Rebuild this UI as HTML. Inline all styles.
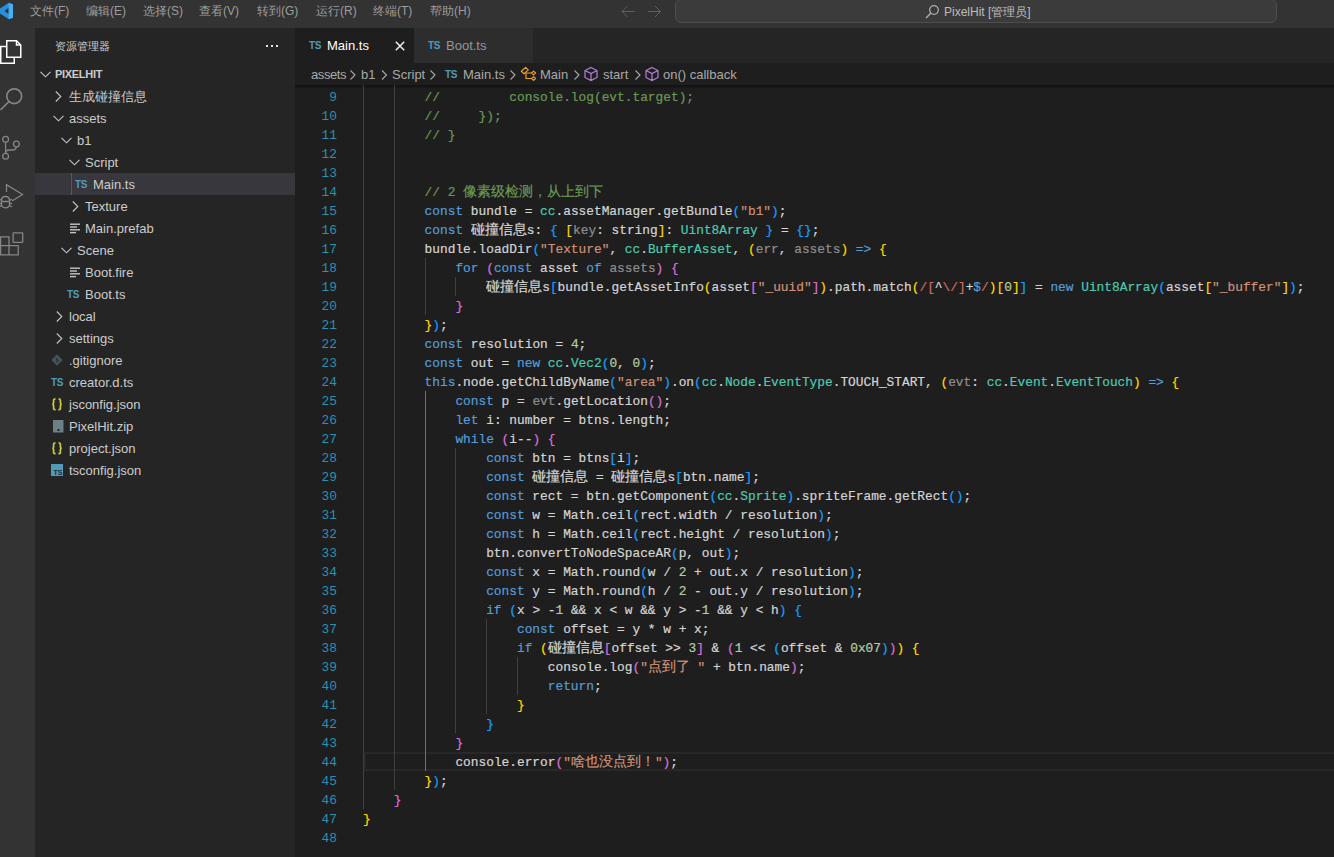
<!DOCTYPE html>
<html><head><meta charset="utf-8">
<style>
*{box-sizing:border-box;margin:0;padding:0}
html,body{width:1334px;height:857px;overflow:hidden;background:#1e1e1e;font-family:"Liberation Sans",sans-serif}
.abs{position:absolute}
#title{left:0;top:0;width:1334px;height:28px;background:#333333;color:#9d9d9d;font-size:12px}
#title .m{position:absolute;top:3px;white-space:nowrap}
#act{left:0;top:28px;width:35px;height:829px;background:#333333}
#side{left:35px;top:28px;width:260px;height:829px;background:#252526;color:#cccccc;font-size:13px}
#tabs{left:295px;top:28px;width:1039px;height:35px;background:#252526;font-size:13px}
#crumb{left:295px;top:63px;width:1039px;height:22px;background:#1e1e1e;color:#a9a9a9;font-size:13px;white-space:nowrap}
#editor{left:295px;top:85px;width:1039px;height:772px;background:#1e1e1e;overflow:hidden}
#nums{position:absolute;left:0;top:3px;width:42px;text-align:right;color:#2b91af;font:12.83px "Liberation Mono",monospace}
#code{position:absolute;left:68px;top:3px;font:12.83px "Liberation Mono",monospace;color:#d4d4d4;-webkit-text-stroke:0.2px}
.l{height:19px;line-height:19px;white-space:pre}
.cj{display:inline-block;font-size:14px;overflow:hidden;vertical-align:top;letter-spacing:0}
.row{position:absolute;left:0;width:260px;height:22px;line-height:22px;white-space:nowrap}
.sel{background:#37373d}
.tsi{top:0;color:#519aba;font-weight:bold;font-size:10px;line-height:22px;letter-spacing:-0.3px}
.jsi{top:0;color:#cbcb41;font-weight:bold;font-size:11px;line-height:21px;letter-spacing:-1px}
.g{position:absolute;width:1px;background:#404040}
.cr{position:absolute;top:1px;line-height:22px}
</style></head><body>
<div id="title" class="abs">
  <svg class="abs" style="left:0;top:0" width="14" height="22" viewBox="0 0 14 22"><path d="M8.8 2.8 L13 4.3 V17.7 L8.8 19.2 L0 13.4 V8.6 Z" fill="#2590e0"/><path d="M8.8 7.6 V14.2 L4.5 10.9 Z" fill="#333333"/><path d="M8.6 2.9 L13 4.3 V17.7 L8.6 19.1 Z" fill="#45aef5"/></svg>
  <div class="m" style="left:30px">文件(F)</div>
  <div class="m" style="left:86px">编辑(E)</div>
  <div class="m" style="left:143px">选择(S)</div>
  <div class="m" style="left:199px">查看(V)</div>
  <div class="m" style="left:257px">转到(G)</div>
  <div class="m" style="left:316px">运行(R)</div>
  <div class="m" style="left:373px">终端(T)</div>
  <div class="m" style="left:430px">帮助(H)</div>
  <svg class="abs" style="left:620px;top:4px" width="50" height="16" viewBox="0 0 50 16"><g fill="none" stroke="#5f5f5f" stroke-width="1"><path d="M2 7.5 H14.5 M7.5 2 L2 7.5 L7.5 13"/><path d="M28 7.5 H40.5 M35 2 L40.5 7.5 L35 13"/></g></svg>
  <div class="abs" style="left:675px;top:-1px;width:602px;height:24px;border:1px solid #4d4d4d;border-radius:6px;background:#3b3b3b"></div>
  <svg class="abs" style="left:925px;top:4px" width="15" height="15" viewBox="0 0 15 15"><circle cx="9" cy="6" r="4.3" fill="none" stroke="#b0b0b0" stroke-width="1.3"/><path d="M6 9 L1 14" stroke="#b0b0b0" stroke-width="1.5"/></svg>
  <div class="m" style="left:944px;top:4px;color:#bdbdbd">PixelHit [管理员]</div>
</div>
<div id="act" class="abs">
  <svg class="abs" style="left:0;top:0" width="35" height="240" viewBox="0 28 35 240">
    <g fill="none" stroke="#ffffff" stroke-width="1.5">
      <path d="M6.75 40.75 H16.5 L20.75 45 V57.25 H6.75 Z"/>
      <path d="M16.5 40.75 V45 H20.75"/>
      <path d="M6.75 46.5 H0.75 V63.25 H14.25 V57.25"/>
    </g>
    <g fill="none" stroke="#858585" stroke-width="1.7">
      <circle cx="14.2" cy="96.2" r="7.4"/>
      <path d="M9 101.5 L0.5 110"/>
    </g>
    <g fill="none" stroke="#858585" stroke-width="1.3">
      <circle cx="5.6" cy="139.3" r="2.9"/>
      <circle cx="5.6" cy="156.2" r="2.9"/>
      <circle cx="16.4" cy="144" r="2.9"/>
      <path d="M5.6 142.2 V153.3"/>
      <path d="M16.4 146.9 Q16 150 12.5 150 H9 Q5.6 150 5.6 153"/>
    </g>
    <g fill="none" stroke="#858585" stroke-width="1.3">
      <path d="M6.5 192 V184.6 L22.5 194.5 L12 201"/>
      <path d="M1.5 200.5 Q1.5 196.5 5.5 196.5 Q9.5 196.5 9.5 200.5 V204 Q9.5 207.8 5.5 207.8 Q1.5 207.8 1.5 204 Z"/>
      <path d="M1.5 201.5 H9.5 M-1 199 L1.5 200.5 M12 199 L9.5 200.5 M-1 203.5 H1.5 M9.5 203.5 H12 M-1 207 L1.5 205.5 M12 207 L9.5 205.5"/>
    </g>
    <g fill="none" stroke="#858585" stroke-width="1.3">
      <rect x="13.1" y="232.8" width="9.6" height="9.6" rx="0.5"/>
      <path d="M0.6 236.8 H9 V254.9 H0.6 Z M0.6 245.7 H18.2 V254.9 H9"/>
    </g>
  </svg>
</div>
<div id="side" class="abs">
  <div class="abs" style="left:20px;top:11px;font-size:11px">资源管理器</div>
  <svg class="abs" style="left:230px;top:16px" width="14" height="4" viewBox="0 0 14 4"><g fill="#e0e0e0"><rect x="1" y="1" width="2" height="2"/><rect x="6" y="1" width="2" height="2"/><rect x="11" y="1" width="2" height="2"/></g></svg>
<div class="row" style="top:35px"><svg class="abs" style="left:5px;top:8px" width="11" height="7" viewBox="0 0 11 7"><polyline points="0.5,0.8 5.5,5.8 10.5,0.8" fill="none" stroke="#c5c5c5" stroke-width="1.1"/></svg><div class="abs" style="left:20px;top:0px;font-weight:bold;font-size:11px;letter-spacing:-0.3px">PIXELHIT</div></div>
<div class="row" style="top:57px"><svg class="abs" style="left:20px;top:6px" width="7" height="11" viewBox="0 0 7 11"><polyline points="0.8,0.5 5.8,5.5 0.8,10.5" fill="none" stroke="#c5c5c5" stroke-width="1.1"/></svg><div class="abs" style="left:34px;top:1px;">生成碰撞信息</div></div>
<div class="row" style="top:79px"><svg class="abs" style="left:18px;top:8px" width="11" height="7" viewBox="0 0 11 7"><polyline points="0.5,0.8 5.5,5.8 10.5,0.8" fill="none" stroke="#c5c5c5" stroke-width="1.1"/></svg><div class="abs" style="left:34px;top:1px;">assets</div></div>
<div class="row" style="top:101px"><svg class="abs" style="left:26px;top:8px" width="11" height="7" viewBox="0 0 11 7"><polyline points="0.5,0.8 5.5,5.8 10.5,0.8" fill="none" stroke="#c5c5c5" stroke-width="1.1"/></svg><div class="abs" style="left:42px;top:1px;">b1</div></div>
<div class="row" style="top:123px"><svg class="abs" style="left:34px;top:8px" width="11" height="7" viewBox="0 0 11 7"><polyline points="0.5,0.8 5.5,5.8 10.5,0.8" fill="none" stroke="#c5c5c5" stroke-width="1.1"/></svg><div class="abs" style="left:50px;top:1px;">Script</div></div>
<div class="row sel" style="top:145px"><div class="abs" style="left:36px;top:0;width:1px;height:22px;background:#585858"></div><div class="abs tsi" style="top:1px;left:40px">TS</div><div class="abs" style="left:58px;top:1px;">Main.ts</div></div>
<div class="row" style="top:167px"><svg class="abs" style="left:37px;top:6px" width="7" height="11" viewBox="0 0 7 11"><polyline points="0.8,0.5 5.8,5.5 0.8,10.5" fill="none" stroke="#c5c5c5" stroke-width="1.1"/></svg><div class="abs" style="left:50px;top:1px;">Texture</div></div>
<div class="row" style="top:189px"><svg class="abs" style="left:35px;top:6px" width="10" height="11" viewBox="0 0 10 11"><g fill="#c5c5c5"><rect x="0" y="0.5" width="10" height="1.4"/><rect x="0" y="3.3" width="7" height="1.4"/><rect x="0" y="6.1" width="10" height="1.4"/><rect x="0" y="8.9" width="6" height="1.4"/></g></svg><div class="abs" style="left:50px;top:1px;">Main.prefab</div></div>
<div class="row" style="top:211px"><svg class="abs" style="left:26px;top:8px" width="11" height="7" viewBox="0 0 11 7"><polyline points="0.5,0.8 5.5,5.8 10.5,0.8" fill="none" stroke="#c5c5c5" stroke-width="1.1"/></svg><div class="abs" style="left:42px;top:1px;">Scene</div></div>
<div class="row" style="top:233px"><svg class="abs" style="left:35px;top:6px" width="10" height="11" viewBox="0 0 10 11"><g fill="#c5c5c5"><rect x="0" y="0.5" width="10" height="1.4"/><rect x="0" y="3.3" width="7" height="1.4"/><rect x="0" y="6.1" width="10" height="1.4"/><rect x="0" y="8.9" width="6" height="1.4"/></g></svg><div class="abs" style="left:50px;top:1px;">Boot.fire</div></div>
<div class="row" style="top:255px"><div class="abs tsi" style="top:1px;left:32px">TS</div><div class="abs" style="left:50px;top:1px;">Boot.ts</div></div>
<div class="row" style="top:277px"><svg class="abs" style="left:21px;top:6px" width="7" height="11" viewBox="0 0 7 11"><polyline points="0.8,0.5 5.8,5.5 0.8,10.5" fill="none" stroke="#c5c5c5" stroke-width="1.1"/></svg><div class="abs" style="left:34px;top:1px;">local</div></div>
<div class="row" style="top:299px"><svg class="abs" style="left:21px;top:6px" width="7" height="11" viewBox="0 0 7 11"><polyline points="0.8,0.5 5.8,5.5 0.8,10.5" fill="none" stroke="#c5c5c5" stroke-width="1.1"/></svg><div class="abs" style="left:34px;top:1px;">settings</div></div>
<div class="row" style="top:321px"><svg class="abs" style="left:16px;top:5px" width="12" height="12" viewBox="0 0 12 12"><path d="M6 0.3 L11.7 6 L6 11.7 L0.3 6 Z" fill="#41535b"/><path d="M4.5 3.5 L8 7 M6 5 V9" stroke="#252526" stroke-width="0.9"/></svg><div class="abs" style="left:34px;top:1px;">.gitignore</div></div>
<div class="row" style="top:343px"><div class="abs tsi" style="top:1px;left:16px">TS</div><div class="abs" style="left:34px;top:1px;">creator.d.ts</div></div>
<div class="row" style="top:365px"><svg class="abs" style="left:16px;top:5px" width="13" height="13" viewBox="0 0 13 13"><g fill="none" stroke="#cbcb41" stroke-width="1.7"><path d="M4.6 1 H3.8 Q2.6 1 2.6 2.3 V5 Q2.6 6.3 1.2 6.3 Q2.6 6.3 2.6 7.6 V10.4 Q2.6 11.6 3.8 11.6 H4.6"/><path d="M7.4 1 H8.2 Q9.4 1 9.4 2.3 V5 Q9.4 6.3 10.8 6.3 Q9.4 6.3 9.4 7.6 V10.4 Q9.4 11.6 8.2 11.6 H7.4"/></g></svg><div class="abs" style="left:34px;top:1px;">jsconfig.json</div></div>
<div class="row" style="top:387px"><svg class="abs" style="left:18px;top:5px" width="11" height="13" viewBox="0 0 11 13"><rect x="0" y="0" width="10.5" height="12.5" fill="#6d8086"/><rect x="4.5" y="9" width="2" height="2" fill="#252526"/></svg><div class="abs" style="left:34px;top:1px;">PixelHit.zip</div></div>
<div class="row" style="top:409px"><svg class="abs" style="left:16px;top:5px" width="13" height="13" viewBox="0 0 13 13"><g fill="none" stroke="#cbcb41" stroke-width="1.7"><path d="M4.6 1 H3.8 Q2.6 1 2.6 2.3 V5 Q2.6 6.3 1.2 6.3 Q2.6 6.3 2.6 7.6 V10.4 Q2.6 11.6 3.8 11.6 H4.6"/><path d="M7.4 1 H8.2 Q9.4 1 9.4 2.3 V5 Q9.4 6.3 10.8 6.3 Q9.4 6.3 9.4 7.6 V10.4 Q9.4 11.6 8.2 11.6 H7.4"/></g></svg><div class="abs" style="left:34px;top:1px;">project.json</div></div>
<div class="row" style="top:431px"><svg class="abs" style="left:16px;top:5px" width="12" height="12" viewBox="0 0 12 12"><rect x="0" y="0" width="12" height="12" fill="#519aba"/><text x="7" y="10.5" text-anchor="middle" font-family="Liberation Sans" font-size="7" fill="#1e2a33" font-weight="bold">TS</text></svg><div class="abs" style="left:34px;top:1px;">tsconfig.json</div></div>

</div>
<div id="tabs" class="abs">
  <div class="abs" style="left:0;top:0;width:119px;height:35px;background:#1e1e1e">
    <div class="abs tsi" style="left:14px;top:7px">TS</div>
    <div class="abs" style="left:32px;top:10px;color:#ffffff">Main.ts</div>
    <svg class="abs" style="left:100px;top:13px" width="10" height="10" viewBox="0 0 10 10"><path d="M0.8 0.8 L9.2 9.2 M9.2 0.8 L0.8 9.2" stroke="#f0f0f0" stroke-width="1.5"/></svg>
  </div>
  <div class="abs" style="left:119px;top:0;width:119px;height:35px;background:#2d2d2d">
    <div class="abs tsi" style="left:14px;top:7px">TS</div>
    <div class="abs" style="left:32px;top:10px;color:#969696">Boot.ts</div>
  </div>
</div>
<div id="crumb" class="abs">
  <div class="cr" style="left:16px;letter-spacing:-0.4px">assets</div>
  <div class="cr" style="left:66px">b1</div>
  <div class="cr" style="left:97px">Script</div>
  <div class="cr tsi" style="left:150px">TS</div>
  <div class="cr" style="left:168px">Main.ts</div>
  <div class="cr" style="left:245px">Main</div>
  <div class="cr" style="left:308px">start</div>
  <div class="cr" style="left:368px">on() callback</div>
  <svg class="abs" style="left:0;top:0" width="460" height="22" viewBox="0 0 460 22"><g fill="none" stroke="#a9a9a9" stroke-width="1.1">
    <path d="M55.5 7.5 L60 12 L55.5 16.5"/><path d="M87 7.5 L91.5 12 L87 16.5"/><path d="M135.5 7.5 L140 12 L135.5 16.5"/><path d="M215.5 7.5 L220 12 L215.5 16.5"/><path d="M279.5 7.5 L284 12 L279.5 16.5"/><path d="M340.5 7.5 L345 12 L340.5 16.5"/>
  </g>
  <g fill="none" stroke="#ee9d28" stroke-width="1.2" stroke-linejoin="round"><path d="M226.3 8.3 L230.6 4.4 L233.3 6.9 L229 10.8 Z"/><path d="M236.6 10 L238.6 8.1 L240.5 10 L238.6 11.9 Z"/><path d="M236.6 15.5 L238.6 13.6 L240.5 15.5 L238.6 17.4 Z"/><path d="M231 9.5 V15.5 H236.6 M231 10 H236.6"/></g>
  <g fill="none" stroke="#b180d7" stroke-width="1.2"><path d="M296 4.5 L302 7.5 V14.5 L296 17.5 L290 14.5 V7.5 Z M290 7.5 L296 10.5 L302 7.5 M296 10.5 V17.5"/></g>
  <g fill="none" stroke="#b180d7" stroke-width="1.2"><path d="M357 4.5 L363 7.5 V14.5 L357 17.5 L351 14.5 V7.5 Z M351 7.5 L357 10.5 L363 7.5 M357 10.5 V17.5"/></g>
  </svg>
</div>
<div id="editor" class="abs">
<div class="abs" style="left:0;top:0;width:1039px;height:4px;background:linear-gradient(#121212,#151515 40%,#1e1e1e)"></div>
<div class="abs" style="left:69px;top:667px;width:980px;height:19px;border:2px solid #282828"></div>
<div class="g" style="left:68px;top:0px;height:724px;background:#404040"></div>
<div class="g" style="left:99px;top:0px;height:705px;background:#404040"></div>
<div class="g" style="left:130px;top:173px;height:57px;background:#404040"></div>
<div class="g" style="left:130px;top:306px;height:380px;background:#707070"></div>
<div class="g" style="left:160px;top:192px;height:19px;background:#404040"></div>
<div class="g" style="left:160px;top:363px;height:285px;background:#404040"></div>
<div class="g" style="left:191px;top:534px;height:95px;background:#404040"></div>
<div class="g" style="left:222px;top:572px;height:38px;background:#404040"></div>

<div id="nums">
<div class="l">9</div>
<div class="l">10</div>
<div class="l">11</div>
<div class="l">12</div>
<div class="l">13</div>
<div class="l">14</div>
<div class="l">15</div>
<div class="l">16</div>
<div class="l">17</div>
<div class="l">18</div>
<div class="l">19</div>
<div class="l">20</div>
<div class="l">21</div>
<div class="l">22</div>
<div class="l">23</div>
<div class="l">24</div>
<div class="l">25</div>
<div class="l">26</div>
<div class="l">27</div>
<div class="l">28</div>
<div class="l">29</div>
<div class="l">30</div>
<div class="l">31</div>
<div class="l">32</div>
<div class="l">33</div>
<div class="l">34</div>
<div class="l">35</div>
<div class="l">36</div>
<div class="l">37</div>
<div class="l">38</div>
<div class="l">39</div>
<div class="l">40</div>
<div class="l">41</div>
<div class="l">42</div>
<div class="l">43</div>
<div class="l">44</div>
<div class="l">45</div>
<div class="l">46</div>
<div class="l">47</div>
<div class="l">48</div>

</div>
<div id="code">
<div class="l">        <span style="color:#6a9955">//         console.log(evt.target);</span></div>
<div class="l">        <span style="color:#6a9955">//     });</span></div>
<div class="l">        <span style="color:#6a9955">// }</span></div>
<div class="l"></div>
<div class="l"></div>
<div class="l">        <span style="color:#6a9955">// 2 </span><span class="cj" style="color:#6a9955;width:140px">像素级检测，从上到下</span></div>
<div class="l">        <span style="color:#569cd6">const</span><span style="color:#d4d4d4"> bundle = </span><span style="color:#4ec9b0">cc</span><span style="color:#d4d4d4">.assetManager.getBundle</span><span style="color:#179fff">(</span><span style="color:#ce9178">&quot;b1&quot;</span><span style="color:#179fff">)</span><span style="color:#d4d4d4">;</span></div>
<div class="l">        <span style="color:#569cd6">const</span><span style="color:#d4d4d4"> </span><span class="cj" style="color:#d4d4d4;width:56px">碰撞信息</span><span style="color:#d4d4d4">s: </span><span style="color:#179fff">{</span><span style="color:#d4d4d4"> </span><span style="color:#ffd700">[</span><span style="color:#8f8f8f">key</span><span style="color:#d4d4d4">: string</span><span style="color:#ffd700">]</span><span style="color:#d4d4d4">: </span><span style="color:#4ec9b0">Uint8Array</span><span style="color:#d4d4d4"> </span><span style="color:#179fff">}</span><span style="color:#d4d4d4"> = </span><span style="color:#179fff">{}</span><span style="color:#d4d4d4">;</span></div>
<div class="l">        <span style="color:#d4d4d4">bundle.loadDir</span><span style="color:#179fff">(</span><span style="color:#ce9178">&quot;Texture&quot;</span><span style="color:#d4d4d4">, </span><span style="color:#4ec9b0">cc</span><span style="color:#d4d4d4">.</span><span style="color:#4ec9b0">BufferAsset</span><span style="color:#d4d4d4">, </span><span style="color:#ffd700">(</span><span style="color:#8f8f8f">err</span><span style="color:#d4d4d4">, </span><span style="color:#8f8f8f">assets</span><span style="color:#ffd700">)</span><span style="color:#d4d4d4"> </span><span style="color:#569cd6">=&gt;</span><span style="color:#d4d4d4"> </span><span style="color:#ffd700">{</span></div>
<div class="l">            <span style="color:#569cd6">for</span><span style="color:#d4d4d4"> </span><span style="color:#da70d6">(</span><span style="color:#569cd6">const</span><span style="color:#d4d4d4"> asset </span><span style="color:#569cd6">of</span><span style="color:#d4d4d4"> </span><span style="color:#8f8f8f">assets</span><span style="color:#da70d6">)</span><span style="color:#d4d4d4"> </span><span style="color:#da70d6">{</span></div>
<div class="l">                <span class="cj" style="color:#d4d4d4;width:56px">碰撞信息</span><span style="color:#d4d4d4">s</span><span style="color:#179fff">[</span><span style="color:#d4d4d4">bundle.getAssetInfo</span><span style="color:#ffd700">(</span><span style="color:#d4d4d4">asset</span><span style="color:#da70d6">[</span><span style="color:#ce9178">&quot;_uuid&quot;</span><span style="color:#da70d6">]</span><span style="color:#ffd700">)</span><span style="color:#d4d4d4">.path.match</span><span style="color:#ffd700">(</span><span style="color:#d16969">/[</span><span style="color:#d4d4d4">^</span><span style="color:#d16969">\/]</span><span style="color:#d4d4d4">+</span><span style="color:#569cd6">$</span><span style="color:#d16969">/</span><span style="color:#ffd700">)</span><span style="color:#ffd700">[</span><span style="color:#b5cea8">0</span><span style="color:#ffd700">]</span><span style="color:#179fff">]</span><span style="color:#d4d4d4"> = </span><span style="color:#569cd6">new</span><span style="color:#d4d4d4"> </span><span style="color:#4ec9b0">Uint8Array</span><span style="color:#179fff">(</span><span style="color:#d4d4d4">asset</span><span style="color:#ffd700">[</span><span style="color:#ce9178">&quot;_buffer&quot;</span><span style="color:#ffd700">]</span><span style="color:#179fff">)</span><span style="color:#d4d4d4">;</span></div>
<div class="l">            <span style="color:#da70d6">}</span></div>
<div class="l">        <span style="color:#ffd700">}</span><span style="color:#179fff">)</span><span style="color:#d4d4d4">;</span></div>
<div class="l">        <span style="color:#569cd6">const</span><span style="color:#d4d4d4"> resolution = </span><span style="color:#b5cea8">4</span><span style="color:#d4d4d4">;</span></div>
<div class="l">        <span style="color:#569cd6">const</span><span style="color:#d4d4d4"> out = </span><span style="color:#569cd6">new</span><span style="color:#d4d4d4"> </span><span style="color:#4ec9b0">cc</span><span style="color:#d4d4d4">.</span><span style="color:#4ec9b0">Vec2</span><span style="color:#179fff">(</span><span style="color:#b5cea8">0</span><span style="color:#d4d4d4">, </span><span style="color:#b5cea8">0</span><span style="color:#179fff">)</span><span style="color:#d4d4d4">;</span></div>
<div class="l">        <span style="color:#569cd6">this</span><span style="color:#d4d4d4">.node.getChildByName</span><span style="color:#179fff">(</span><span style="color:#ce9178">&quot;area&quot;</span><span style="color:#179fff">)</span><span style="color:#d4d4d4">.on</span><span style="color:#179fff">(</span><span style="color:#4ec9b0">cc</span><span style="color:#d4d4d4">.</span><span style="color:#4ec9b0">Node</span><span style="color:#d4d4d4">.</span><span style="color:#4ec9b0">EventType</span><span style="color:#d4d4d4">.TOUCH_START, </span><span style="color:#ffd700">(</span><span style="color:#8f8f8f">evt</span><span style="color:#d4d4d4">: </span><span style="color:#4ec9b0">cc</span><span style="color:#d4d4d4">.</span><span style="color:#4ec9b0">Event</span><span style="color:#d4d4d4">.</span><span style="color:#4ec9b0">EventTouch</span><span style="color:#ffd700">)</span><span style="color:#d4d4d4"> </span><span style="color:#569cd6">=&gt;</span><span style="color:#d4d4d4"> </span><span style="color:#ffd700">{</span></div>
<div class="l">            <span style="color:#569cd6">const</span><span style="color:#d4d4d4"> p = </span><span style="color:#8f8f8f">evt</span><span style="color:#d4d4d4">.getLocation</span><span style="color:#da70d6">()</span><span style="color:#d4d4d4">;</span></div>
<div class="l">            <span style="color:#569cd6">let</span><span style="color:#d4d4d4"> i: number = btns.length;</span></div>
<div class="l">            <span style="color:#569cd6">while</span><span style="color:#d4d4d4"> </span><span style="color:#da70d6">(</span><span style="color:#d4d4d4">i--</span><span style="color:#da70d6">)</span><span style="color:#d4d4d4"> </span><span style="color:#da70d6">{</span></div>
<div class="l">                <span style="color:#569cd6">const</span><span style="color:#d4d4d4"> btn = btns</span><span style="color:#179fff">[</span><span style="color:#d4d4d4">i</span><span style="color:#179fff">]</span><span style="color:#d4d4d4">;</span></div>
<div class="l">                <span style="color:#569cd6">const</span><span style="color:#d4d4d4"> </span><span class="cj" style="color:#d4d4d4;width:56px">碰撞信息</span><span style="color:#d4d4d4"> = </span><span class="cj" style="color:#d4d4d4;width:56px">碰撞信息</span><span style="color:#d4d4d4">s</span><span style="color:#179fff">[</span><span style="color:#d4d4d4">btn.name</span><span style="color:#179fff">]</span><span style="color:#d4d4d4">;</span></div>
<div class="l">                <span style="color:#569cd6">const</span><span style="color:#d4d4d4"> rect = btn.getComponent</span><span style="color:#179fff">(</span><span style="color:#4ec9b0">cc</span><span style="color:#d4d4d4">.</span><span style="color:#4ec9b0">Sprite</span><span style="color:#179fff">)</span><span style="color:#d4d4d4">.spriteFrame.getRect</span><span style="color:#179fff">()</span><span style="color:#d4d4d4">;</span></div>
<div class="l">                <span style="color:#569cd6">const</span><span style="color:#d4d4d4"> w = Math.ceil</span><span style="color:#179fff">(</span><span style="color:#d4d4d4">rect.width / resolution</span><span style="color:#179fff">)</span><span style="color:#d4d4d4">;</span></div>
<div class="l">                <span style="color:#569cd6">const</span><span style="color:#d4d4d4"> h = Math.ceil</span><span style="color:#179fff">(</span><span style="color:#d4d4d4">rect.height / resolution</span><span style="color:#179fff">)</span><span style="color:#d4d4d4">;</span></div>
<div class="l">                <span style="color:#d4d4d4">btn.convertToNodeSpaceAR</span><span style="color:#179fff">(</span><span style="color:#d4d4d4">p, out</span><span style="color:#179fff">)</span><span style="color:#d4d4d4">;</span></div>
<div class="l">                <span style="color:#569cd6">const</span><span style="color:#d4d4d4"> x = Math.round</span><span style="color:#179fff">(</span><span style="color:#d4d4d4">w / </span><span style="color:#b5cea8">2</span><span style="color:#d4d4d4"> + out.x / resolution</span><span style="color:#179fff">)</span><span style="color:#d4d4d4">;</span></div>
<div class="l">                <span style="color:#569cd6">const</span><span style="color:#d4d4d4"> y = Math.round</span><span style="color:#179fff">(</span><span style="color:#d4d4d4">h / </span><span style="color:#b5cea8">2</span><span style="color:#d4d4d4"> - out.y / resolution</span><span style="color:#179fff">)</span><span style="color:#d4d4d4">;</span></div>
<div class="l">                <span style="color:#569cd6">if</span><span style="color:#d4d4d4"> </span><span style="color:#179fff">(</span><span style="color:#d4d4d4">x &gt; -</span><span style="color:#b5cea8">1</span><span style="color:#d4d4d4"> &amp;&amp; x &lt; w &amp;&amp; y &gt; -</span><span style="color:#b5cea8">1</span><span style="color:#d4d4d4"> &amp;&amp; y &lt; h</span><span style="color:#179fff">)</span><span style="color:#d4d4d4"> </span><span style="color:#179fff">{</span></div>
<div class="l">                    <span style="color:#569cd6">const</span><span style="color:#d4d4d4"> offset = y * w + x;</span></div>
<div class="l">                    <span style="color:#569cd6">if</span><span style="color:#d4d4d4"> </span><span style="color:#ffd700">(</span><span class="cj" style="color:#d4d4d4;width:56px">碰撞信息</span><span style="color:#da70d6">[</span><span style="color:#d4d4d4">offset &gt;&gt; </span><span style="color:#b5cea8">3</span><span style="color:#da70d6">]</span><span style="color:#d4d4d4"> &amp; </span><span style="color:#da70d6">(</span><span style="color:#b5cea8">1</span><span style="color:#d4d4d4"> &lt;&lt; </span><span style="color:#179fff">(</span><span style="color:#d4d4d4">offset &amp; </span><span style="color:#b5cea8">0x07</span><span style="color:#179fff">)</span><span style="color:#da70d6">)</span><span style="color:#ffd700">)</span><span style="color:#d4d4d4"> </span><span style="color:#ffd700">{</span></div>
<div class="l">                        <span style="color:#d4d4d4">console.log</span><span style="color:#da70d6">(</span><span style="color:#ce9178">&quot;</span><span class="cj" style="color:#ce9178;width:42px">点到了</span><span style="color:#ce9178"> &quot;</span><span style="color:#d4d4d4"> + btn.name</span><span style="color:#da70d6">)</span><span style="color:#d4d4d4">;</span></div>
<div class="l">                        <span style="color:#569cd6">return</span><span style="color:#d4d4d4">;</span></div>
<div class="l">                    <span style="color:#ffd700">}</span></div>
<div class="l">                <span style="color:#179fff">}</span></div>
<div class="l">            <span style="color:#da70d6">}</span></div>
<div class="l">            <span style="color:#d4d4d4">console.error</span><span style="color:#da70d6">(</span><span style="color:#ce9178">&quot;</span><span class="cj" style="color:#ce9178;width:84px">啥也没点到！</span><span style="color:#ce9178">&quot;</span><span style="color:#da70d6">)</span><span style="color:#d4d4d4">;</span></div>
<div class="l">        <span style="color:#ffd700">}</span><span style="color:#179fff">)</span><span style="color:#d4d4d4">;</span></div>
<div class="l">    <span style="color:#da70d6">}</span></div>
<div class="l"><span style="color:#ffd700">}</span></div>
<div class="l"></div>

</div>
</div>
</body></html>
